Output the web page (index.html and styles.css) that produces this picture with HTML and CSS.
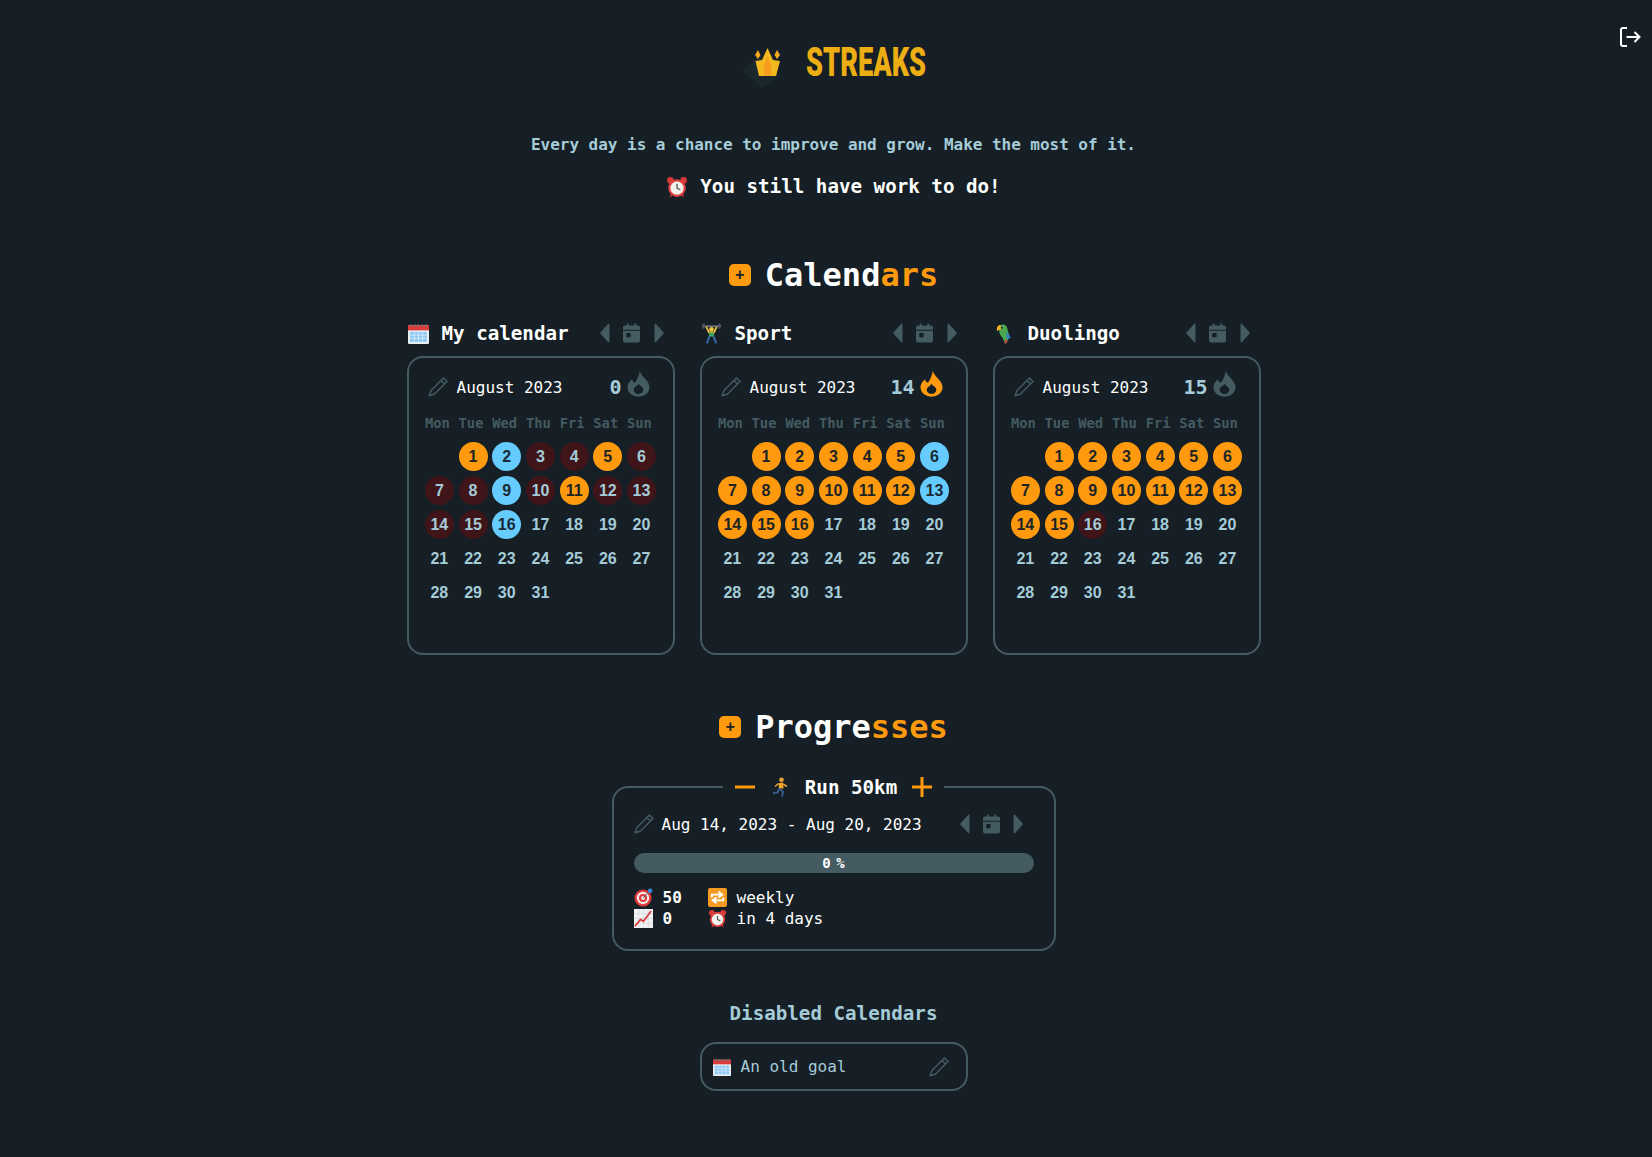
FILE: index.html
```html
<!DOCTYPE html>
<html lang="en">
<head>
    <meta charset="UTF-8">
    <title>Streaks</title>
    <link rel="stylesheet" href="styles.css">
</head>
<body>

    <svg class="defs" width="0" height="0">
        <symbol id="i-pencil" viewBox="0 0 20 20"><path d="M15.500 1 19 4.500 6.500 17 1.200 18.800 3 13.500ZM13 3.500 16.500 7" fill="none" stroke="currentColor" stroke-width="1.500" stroke-linejoin="round"/></symbol>
        <symbol id="i-prev" viewBox="0 0 10 20"><path d="M9.500 1.500C9.500.5 8.800.3 8 1L1 8.700C0 9.500 0 10.500 1 11.300L8 19C8.800 19.700 9.500 19.500 9.500 18.500Z" fill="currentColor"/></symbol>
        <symbol id="i-next" viewBox="0 0 10 20"><path d="M.5 1.500C.5.5 1.200.3 2 1L9 8.700C10 9.500 10 10.500 9 11.300L2 19C1.200 19.700.5 19.500.5 18.500Z" fill="currentColor"/></symbol>
        <symbol id="i-date" viewBox="0 0 18 20"><path fill-rule="evenodd" d="M4 0H6V2H12V0H14V2H16C17.100 2 18 2.900 18 4V18C18 19.100 17.100 20 16 20H2C.9 20 0 19.100 0 18V4C0 2.900.9 2 2 2H4ZM0 6.500V7.500H18V6.500ZM3.500 10V14.500H8V10Z" fill="currentColor"/></symbol>
        <symbol id="i-flame" viewBox="0 0 24 28"><path fill-rule="evenodd" d="M13.500.5C13.500 6 23.500 10.500 23.500 18A11.500 9.800 0 0 1 .5 18C.5 14 3 11.500 5.500 9.500 5.500 12 6.800 13 8.500 13 10.500 10.500 12.500 6 13.500.5ZM12 14C12.300 16.500 17 17 17 20.500A5 4.500 0 0 1 7 20.500C7 17.500 11 17 12 14Z" fill="currentColor"/></symbol>
        <symbol id="e-cal" viewBox="0 0 20 20"><rect x="0" y="2" width="20" height="18" rx="1" fill="#e8edf0"/><rect x="0" y="2" width="20" height="5" fill="#dd3b3b"/><rect x="2" y="8.500" width="16" height="9.500" fill="#8cc8f5"/><path d="M2 11.500H18M2 14.500H18M6 8.500V18M10 8.500V18M14 8.500V18" stroke="#d8ecfb" stroke-width=".8"/><path d="M3 1V4M6.500 1V4M10 1V4M13.500 1V4M17 1V4" stroke="#6b7680" stroke-width="1"/></symbol>
        <symbol id="e-clock" viewBox="0 0 20 20"><circle cx="4" cy="4" r="3" fill="#d83a3a"/><circle cx="16" cy="4" r="3" fill="#d83a3a"/><path d="M4 19 6 16M16 19 14 16" stroke="#c23030" stroke-width="1.500"/><circle cx="10" cy="11" r="8" fill="#e04343"/><circle cx="10" cy="11" r="6" fill="#f2f2ee"/><path d="M10 7V11L13 12.500" fill="none" stroke="#555" stroke-width="1.200"/></symbol>
        <symbol id="e-target" viewBox="0 0 20 20"><circle cx="9.500" cy="10.500" r="9" fill="#e03a3a"/><circle cx="9.500" cy="10.500" r="6.500" fill="#f5f0ee"/><circle cx="9.500" cy="10.500" r="4.300" fill="#e03a3a"/><circle cx="9.500" cy="10.500" r="2" fill="#f5f0ee"/><path d="M9.500 10.500 17 3" stroke="#556" stroke-width="1"/><circle cx="17" cy="3" r="2.400" fill="#3a86d8"/></symbol>
        <symbol id="e-repeat" viewBox="0 0 20 20"><rect width="20" height="20" rx="2" fill="#f59a23"/><path d="M4 10V7H13M11 4 15 7 11 10M16 10V13H7M9 10 5 13 9 16" fill="none" stroke="#fff" stroke-width="2"/></symbol>
        <symbol id="e-chart" viewBox="0 0 20 20"><rect width="20" height="20" fill="#f0f2f4"/><path d="M5 0V20M10 0V20M15 0V20M0 5H20M0 10H20M0 15H20" stroke="#c9d2da" stroke-width=".6"/><path d="M1 18 7 11 10 13 18 2" fill="none" stroke="#dd3b3b" stroke-width="1.800"/></symbol>
        <symbol id="e-lift" viewBox="0 0 20 20"><path d="M1 3H19" stroke="#6b7680" stroke-width="1.500"/><path d="M2.500 .5V5.500M17.500 .5V5.500" stroke="#4a5560" stroke-width="2"/><circle cx="10" cy="6" r="2.300" fill="#f5c33b"/><path d="M5 3.500 7.500 9H12.500L15 3.500" fill="none" stroke="#f5c33b" stroke-width="1.600"/><path d="M7.500 9H12.500V13H7.500Z" fill="#3fa25a"/><path d="M8 13 5.500 19.500M12 13 14.500 19.500" stroke="#3465a4" stroke-width="2"/></symbol>
        <symbol id="e-parrot" viewBox="0 0 20 20"><path d="M6 2C10 0 13 3 13 7L15 13 11 20 8 14C5 11 4 7 6 2Z" fill="#4aa84f"/><path d="M6 2C4 2 2 4 3 8 4 7 5 6 7 6Z" fill="#f0b429"/><circle cx="7.500" cy="4.500" r="1" fill="#222"/><path d="M12 8 16 14 12 15Z" fill="#2f7fd0"/><path d="M11 15 10 20 13 18Z" fill="#d83a3a"/></symbol>
        <symbol id="e-run" viewBox="0 0 20 20"><circle cx="11.500" cy="2.800" r="2.300" fill="#e8a33d"/><path d="M8.500 6 13 5.500 13.500 11.500 9 11.500Z" fill="#f5a524"/><path d="M8.500 6.500 5 9.500M13 7 17 9.500" stroke="#e8a33d" stroke-width="1.500"/><path d="M10 11.500 13 15 12 19.500M9.500 11.500 7.500 15.500 3 16" fill="none" stroke="#3a5a8c" stroke-width="2"/></symbol>
    </svg>

    <a class="logout" href="#">
        <svg width="22" height="22" viewBox="0 0 22 22" fill="none" stroke="currentColor" stroke-width="2"><path d="M8 2H4C2.800 2 2 2.800 2 4V18C2 19.200 2.800 20 4 20H8M7.500 11H20.500M15.500 6 20.500 11 15.500 16"/></svg>
    </a>

    <main class="page">
        <header class="logo">
            <svg class="logo-mark" width="44" height="44" viewBox="0 0 44 44">
                <path d="M2 25 20 10 40 30 22 43Z" fill="#1a282d"/>
                <g transform="translate(15 2)">
                    <path d="M12.500 1 18 13 25 14 21 29H4L.5 14 7 13Z" fill="#f4b81f"/>
                    <path d="M12.500 9 16.500 20 15.500 29H9.500L8.500 20Z" fill="#f89c1e"/>
                    <path d="M3 3 0 8 3 12 5.500 8ZM22 3 25 8 22 12 19.500 8Z" fill="#f4a91f"/>
                </g>
            </svg>
            <span class="logo-text">STREAKS</span>
        </header>

        <p class="motto">Every day is a chance to improve and grow. Make the most of it.</p>
        <p class="status"><svg class="emoji" width="22" height="22"><use href="#e-clock"/></svg>You still have work to do!</p>

        <h2 class="section-title"><button class="add-btn">+</button><span>Calend<em>ars</em></span></h2>

        <div class="calendars">
            <section>
                <div class="cal-head">
                    <svg class="emoji" width="21" height="21"><use href="#e-cal"/></svg>
                    <h3>My calendar</h3>
                    <div class="nav">
                        <svg width="10" height="20"><use href="#i-prev"/></svg>
                        <svg width="17" height="20"><use href="#i-date"/></svg>
                        <svg width="10" height="20"><use href="#i-next"/></svg>
                    </div>
                </div>
                <div class="card">
                    <div class="card-top">
                        <svg class="pencil" width="20" height="20"><use href="#i-pencil"/></svg>
                        <span class="month">August 2023</span>
                        <span class="streak">0</span>
                        <svg class="flame" width="23" height="27"><use href="#i-flame"/></svg>
                    </div>
                    <div class="grid">
                        <b>Mon</b><b>Tue</b><b>Wed</b><b>Thu</b><b>Fri</b><b>Sat</b><b>Sun</b>
                        <i></i><i class="on">1</i><i class="free">2</i><i class="miss">3</i><i class="miss">4</i><i class="on">5</i><i class="miss">6</i>
                        <i class="miss">7</i><i class="miss">8</i><i class="free">9</i><i class="miss">10</i><i class="on">11</i><i class="miss">12</i><i class="miss">13</i>
                        <i class="miss">14</i><i class="miss">15</i><i class="free">16</i><i>17</i><i>18</i><i>19</i><i>20</i>
                        <i>21</i><i>22</i><i>23</i><i>24</i><i>25</i><i>26</i><i>27</i>
                        <i>28</i><i>29</i><i>30</i><i>31</i>
                    </div>
                </div>
            </section>

            <section>
                <div class="cal-head">
                    <svg class="emoji" width="21" height="21"><use href="#e-lift"/></svg>
                    <h3>Sport</h3>
                    <div class="nav">
                        <svg width="10" height="20"><use href="#i-prev"/></svg>
                        <svg width="17" height="20"><use href="#i-date"/></svg>
                        <svg width="10" height="20"><use href="#i-next"/></svg>
                    </div>
                </div>
                <div class="card">
                    <div class="card-top">
                        <svg class="pencil" width="20" height="20"><use href="#i-pencil"/></svg>
                        <span class="month">August 2023</span>
                        <span class="streak">14</span>
                        <svg class="flame lit" width="23" height="27"><use href="#i-flame"/></svg>
                    </div>
                    <div class="grid">
                        <b>Mon</b><b>Tue</b><b>Wed</b><b>Thu</b><b>Fri</b><b>Sat</b><b>Sun</b>
                        <i></i><i class="on">1</i><i class="on">2</i><i class="on">3</i><i class="on">4</i><i class="on">5</i><i class="free">6</i>
                        <i class="on">7</i><i class="on">8</i><i class="on">9</i><i class="on">10</i><i class="on">11</i><i class="on">12</i><i class="free">13</i>
                        <i class="on">14</i><i class="on">15</i><i class="on">16</i><i>17</i><i>18</i><i>19</i><i>20</i>
                        <i>21</i><i>22</i><i>23</i><i>24</i><i>25</i><i>26</i><i>27</i>
                        <i>28</i><i>29</i><i>30</i><i>31</i>
                    </div>
                </div>
            </section>

            <section>
                <div class="cal-head">
                    <svg class="emoji" width="21" height="21"><use href="#e-parrot"/></svg>
                    <h3>Duolingo</h3>
                    <div class="nav">
                        <svg width="10" height="20"><use href="#i-prev"/></svg>
                        <svg width="17" height="20"><use href="#i-date"/></svg>
                        <svg width="10" height="20"><use href="#i-next"/></svg>
                    </div>
                </div>
                <div class="card">
                    <div class="card-top">
                        <svg class="pencil" width="20" height="20"><use href="#i-pencil"/></svg>
                        <span class="month">August 2023</span>
                        <span class="streak">15</span>
                        <svg class="flame" width="23" height="27"><use href="#i-flame"/></svg>
                    </div>
                    <div class="grid">
                        <b>Mon</b><b>Tue</b><b>Wed</b><b>Thu</b><b>Fri</b><b>Sat</b><b>Sun</b>
                        <i></i><i class="on">1</i><i class="on">2</i><i class="on">3</i><i class="on">4</i><i class="on">5</i><i class="on">6</i>
                        <i class="on">7</i><i class="on">8</i><i class="on">9</i><i class="on">10</i><i class="on">11</i><i class="on">12</i><i class="on">13</i>
                        <i class="on">14</i><i class="on">15</i><i class="miss">16</i><i>17</i><i>18</i><i>19</i><i>20</i>
                        <i>21</i><i>22</i><i>23</i><i>24</i><i>25</i><i>26</i><i>27</i>
                        <i>28</i><i>29</i><i>30</i><i>31</i>
                    </div>
                </div>
            </section>
        </div>

        <h2 class="section-title progress-title"><button class="add-btn">+</button><span>Progre<em>sses</em></span></h2>

        <fieldset class="progress">
            <legend>
                <svg width="20" height="20" viewBox="0 0 20 20"><path d="M0 10H20" stroke="#ff9a0f" stroke-width="3"/></svg>
                <svg class="emoji" width="20" height="20"><use href="#e-run"/></svg>
                <span>Run 50km</span>
                <svg width="20" height="20" viewBox="0 0 20 20"><path d="M0 10H20M10 0V20" stroke="#ff9a0f" stroke-width="3"/></svg>
            </legend>
            <div class="range">
                <svg class="pencil" width="20" height="20"><use href="#i-pencil"/></svg>
                <span class="dates">Aug 14, 2023 - Aug 20, 2023</span>
                <div class="nav">
                    <svg width="10" height="20"><use href="#i-prev"/></svg>
                    <svg width="17" height="20"><use href="#i-date"/></svg>
                    <svg width="10" height="20"><use href="#i-next"/></svg>
                </div>
            </div>
            <div class="bar">0 %</div>
            <div class="stats">
                <svg width="19" height="19"><use href="#e-target"/></svg><strong>50</strong>
                <svg width="19" height="19"><use href="#e-repeat"/></svg><span>weekly</span>
                <svg width="19" height="19"><use href="#e-chart"/></svg><strong>0</strong>
                <svg width="19" height="19"><use href="#e-clock"/></svg><span>in 4 days</span>
            </div>
        </fieldset>

        <h4 class="disabled-title">Disabled Calendars</h4>
        <div class="disabled">
            <svg width="18" height="18"><use href="#e-cal"/></svg>
            <span>An old goal</span>
            <svg class="pencil" width="20" height="20"><use href="#i-pencil"/></svg>
        </div>
    </main>

</body>
</html>
```

FILE: styles.css
```css
:root {
    --bg: #151f25;
    --line: #445b62;
    --orange: #ff9a0f;
    --blue: #66ccff;
    --red: #3f151a;
    --text: #a5cbd8;
    --font-mono: "DejaVu Sans Mono", "Liberation Mono", monospace;
}

* { margin: 0; padding: 0; box-sizing: border-box; }

html, body { height: 100%; }

body {
    background: var(--bg);
    color: #fff;
    font-family: var(--font-mono);
    overflow: hidden;
}

.defs { position: absolute; }

svg { display: block; flex: none; }

.logout {
    position: absolute;
    top: 26px;
    right: 11px;
    color: #fff;
}

.page {
    display: flex;
    flex-direction: column;
    align-items: center;
    padding: 32px 0 0 15px;
}

/* header */
.logo {
    display: flex;
    align-items: center;
    height: 60px;
}

.logo-mark { margin-top: 10px; }

.logo-text {
    display: block;
    width: 122px;
    margin-left: 22px;
    font-family: Roboto, sans-serif;
    font-size: 40px;
    font-weight: 900;
    color: #ecae12;
    white-space: nowrap;
    transform: scaleX(.68);
    transform-origin: left center;
}

.motto {
    margin-top: 41px;
    font-size: 16px;
    line-height: 24px;
    font-weight: 600;
    color: var(--text);
    letter-spacing: -.03px;
}

.status {
    display: flex;
    align-items: center;
    gap: 12px;
    margin-top: 16px;
    font-size: 19.2px;
    line-height: 28px;
    font-weight: 700;
}

.section-title {
    display: flex;
    align-items: center;
    gap: 14px;
    height: 44px;
    margin-top: 52px;
    font-size: 32px;
    font-weight: 600;
}

.section-title em {
    font-style: normal;
    color: var(--orange);
}

.add-btn {
    width: 22px;
    height: 22px;
    border: 0;
    border-radius: 5px;
    background: var(--orange);
    color: var(--bg);
    font-family: var(--font-mono);
    font-size: 15px;
    font-weight: 700;
    line-height: 22px;
}

/* calendars */
.calendars {
    display: flex;
    gap: 25px;
    margin-top: 22px;
}

.calendars section { width: 268px; }

.cal-head {
    display: flex;
    align-items: center;
    height: 28px;
    margin-bottom: 9px;
}

.cal-head .emoji { margin-left: 1px; }

.cal-head h3 {
    flex: 1;
    margin-left: 13px;
    font-size: 19.2px;
    font-weight: 700;
}

.nav {
    display: flex;
    align-items: center;
    gap: 13.5px;
    color: var(--line);
    margin-right: 11px;
}

.card {
    height: 299px;
    padding: 13px 14px 0;
    border: 2px solid var(--line);
    border-radius: 16px;
}

.card-top {
    display: flex;
    align-items: center;
    height: 32px;
    padding-left: 5px;
}

.pencil { color: var(--line); }

.month {
    flex: 1;
    margin-left: 9px;
    font-size: 16px;
}

.streak {
    margin-top: -1px;
    font-size: 20px;
    font-weight: 700;
    color: var(--text);
}

.flame {
    margin: -7px 9px 0 5px;
    color: var(--line);
}

.flame.lit { color: var(--orange); }

.grid {
    display: grid;
    grid-template-columns: repeat(7, 33.7px);
    grid-template-rows: 32px;
    grid-auto-rows: 34px;
    justify-items: center;
    align-items: center;
    margin-top: 4px;
}

.grid b {
    margin-right: 4px;
    font-size: 13.8px;
    font-weight: 600;
    color: var(--line);
}

.grid i {
    display: block;
    width: 29px;
    height: 29px;
    border-radius: 50%;
    font-family: "Liberation Sans", Arial, sans-serif;
    font-size: 16px;
    font-style: normal;
    font-weight: 700;
    line-height: 29px;
    text-align: center;
    color: var(--text);
}

.grid i.on { background: var(--orange); color: #1c2426; }
.grid i.free { background: var(--blue); color: #1a2a33; }
.grid i.miss { background: var(--red); }

/* progress */
.progress-title { margin-top: 50px; }

.progress {
    width: 444px;
    height: 180px;
    margin-top: 22px;
    padding: 0 20px;
    border: 2px solid var(--line);
    border-radius: 16px;
}

.progress legend {
    display: flex;
    align-items: center;
    gap: 15px;
    height: 32px;
    margin: 0 auto;
    padding: 0 12px;
    font-size: 19.2px;
    font-weight: 700;
}

.range {
    display: flex;
    align-items: center;
    height: 30px;
    margin-top: 6px;
}

.range .dates {
    flex: 1;
    margin-left: 8px;
    font-size: 16px;
}

.range .nav { margin-right: 11px; gap: 13px; }

.bar {
    height: 20px;
    margin-top: 14px;
    border-radius: 10px;
    background: var(--line);
    font-size: 14px;
    font-weight: 700;
    line-height: 20px;
    text-align: center;
    word-spacing: -3px;
}

.stats {
    display: grid;
    grid-template-columns: 29px 45px 29px 1fr;
    grid-auto-rows: 21px;
    align-items: center;
    margin-top: 14px;
    font-size: 16px;
}

/* disabled calendars */
.disabled-title {
    margin-top: 50px;
    font-size: 19.2px;
    line-height: 26px;
    font-weight: 600;
    color: var(--text);
}

.disabled {
    display: flex;
    align-items: center;
    width: 268px;
    height: 49px;
    margin-top: 15px;
    padding: 0 17px 0 11px;
    border: 2px solid var(--line);
    border-radius: 16px;
    font-size: 16px;
    color: var(--text);
}

.disabled span {
    flex: 1;
    margin-left: 10px;
}
```
